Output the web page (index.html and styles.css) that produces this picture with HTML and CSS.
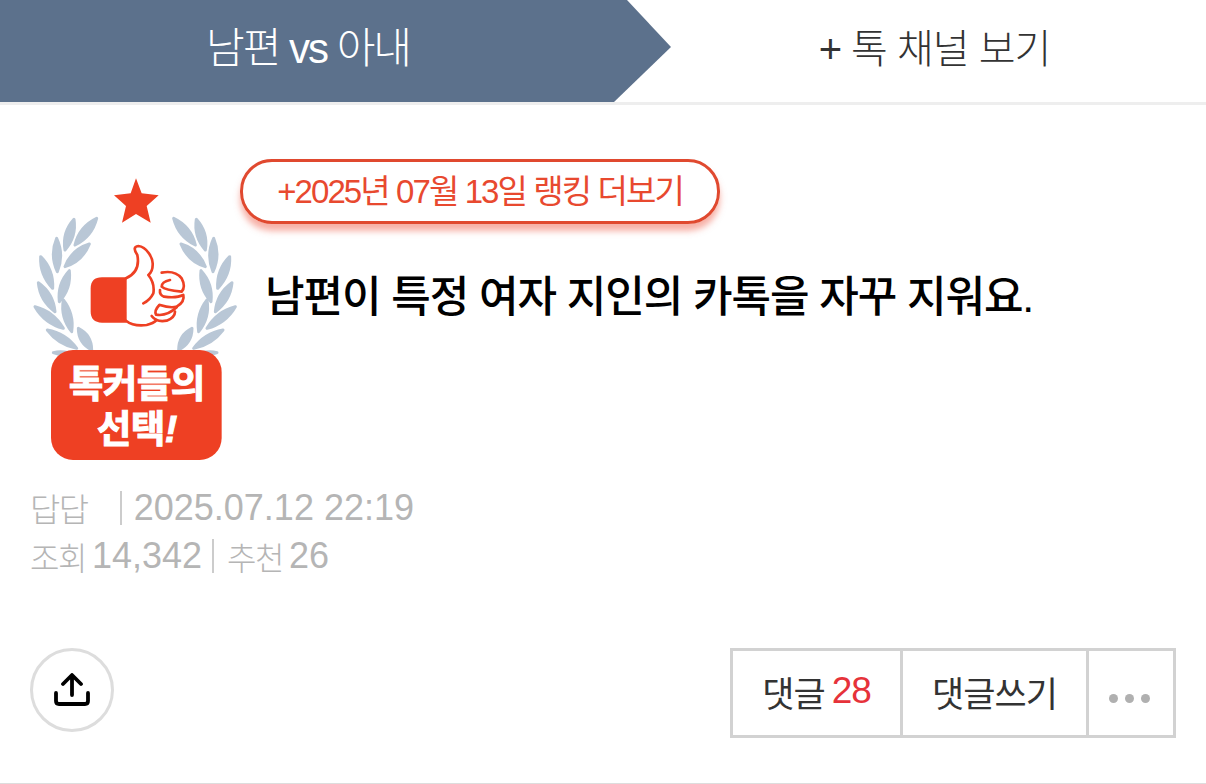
FILE: index.html
```html
<!DOCTYPE html>
<html lang="ko">
<head>
  <meta charset="UTF-8">
  <title>남편이 특정 여자 지인의 카톡을 자꾸 지워요.</title>
  <link rel="stylesheet" href="styles.css">
</head>
<body>

<div class="page">
  <div class="tabs">
    <div class="tab-active">남편 vs 아내</div>
    <div class="tab-more">+ 톡 채널 보기</div>
  </div>

  <div class="content">
    <div class="head-row">
      <svg class="badge" viewBox="90 75 630 870" width="210" height="290">
        <defs>
          <g id="laurel">
            <path d="M290 205Q276 260 225 285Q238 230 290 205Z"/>
            <path d="M222 208Q230 260 195 300Q186 248 222 208Z"/>
            <path d="M268 282Q247 334 195 350Q215 298 268 282Z"/>
            <path d="M170 265Q193 315 172 365Q149 315 170 265Z"/>
            <path d="M208 362Q214 415 178 455Q172 401 208 362Z"/>
            <path d="M122 320Q161 359 158 415Q119 375 122 320Z"/>
            <path d="M115 398Q160 430 165 485Q120 452 115 398Z"/>
            <path d="M190 450Q223 492 215 545Q181 502 190 450Z"/>
            <path d="M105 470Q160 484 190 535Q134 520 105 470Z"/>
            <path d="M235 535Q275 555 275 600Q235 579 235 535Z"/>
            <path d="M142 540Q197 550 230 595Q175 584 142 540Z"/>
            <path d="M160 608Q195 600 230 618Q195 622 160 608Z"/>
          </g>
        </defs>
        <path class="star" d="M408 85L425 130L476 136L440 168L452 218L408 192L366 218L378 168L342 136L392 130Z"/>
        <use href="#laurel" class="leaf"/>
        <use href="#laurel" class="leaf" transform="translate(811 0) scale(-1 1)"/>
        <path class="cuff" d="M380 382H306Q272 382 272 416V484Q272 518 306 518H380Z"/>
        <path class="hand" d="M378 385C400 375 420 355 412 315Q395 290 415 288C440 290 460 325 458 345Q458 365 445 375Q465 400 460 430Q450 450 430 460"/>
        <path class="hand" d="M378 512Q400 530 440 525Q460 520 470 510"/>
        <path class="hand" d="M485 368Q525 360 545 385Q558 410 545 425M510 390Q485 395 485 410Q495 420 545 425"/>
        <path class="hand" d="M480 420Q478 435 492 440Q530 445 550 435Q555 455 530 470Q510 475 480 465"/>
        <path class="hand" d="M478 465Q462 482 468 494Q500 500 530 472"/>
        <path class="hand" d="M455 498Q470 518 500 512Q525 502 525 485"/>
        <rect class="plate" x="153" y="600" width="512" height="330" rx="66"/>
        <text class="plate-text" x="410" y="742">톡커들의</text>
        <text class="plate-text" x="410" y="876">선택<tspan class="plate-mark">!</tspan></text>
      </svg>

      <div class="head-main">
        <a class="rank-link">+2025년 07월 13일 랭킹 더보기</a>
        <h1 class="title">남편이 특정 여자 지인의 카톡을 자꾸 지워요.</h1>
      </div>
    </div>

    <div class="meta">
      <div class="meta-row">
        <span class="author">답답</span>
        <span class="sep sep-author"></span>
        <span>2025.07.12 22:19</span>
      </div>
      <div class="meta-row">
        <span class="label">조회</span>
        <span>14,342</span>
        <span class="sep"></span>
        <span class="label">추천</span>
        <span>26</span>
      </div>
    </div>

    <div class="actions">
      <div class="share">
        <svg viewBox="0 0 36 34" width="36" height="34">
          <path d="M2 20V28Q2 31 5 31H31Q34 31 34 28V20M18 22V3M9 11L18 2L27 11"/>
        </svg>
      </div>
      <div class="btn-group">
        <div class="btn btn-reply">댓글<em>28</em></div>
        <div class="btn btn-write">댓글쓰기</div>
        <div class="btn btn-more"><i></i><i></i><i></i></div>
      </div>
    </div>
  </div>
</div>

</body>
</html>
```

FILE: styles.css
```css
* {
  box-sizing: border-box;
}

body {
  margin: 0;
  background: #fff;
  font-family: 'Liberation Sans', 'Noto Sans CJK KR', sans-serif;
}

.page {
  height: 784px;
  border-bottom: 1px solid #ddd;
  overflow: hidden;
}

/* top tabs */
.tabs {
  display: flex;
  height: 105px;
  border-bottom: 3px solid #eee;
}

.tab-active {
  width: 671px;
  padding-right: 55px;
  background: #5c718c;
  color: #fff;
  font-size: 42px;
  font-weight: 300;
  letter-spacing: -2px;
  line-height: 98px;
  text-align: center;
  clip-path: polygon(0 0, 627px 0, 671px 47px, 614px 102px, 0 102px);
}

.tab-more {
  flex: 1;
  padding-right: 8px;
  color: #333;
  font-size: 40px;
  font-weight: 300;
  letter-spacing: -1px;
  line-height: 98px;
  text-align: center;
}

.content {
  padding: 54px 30px 0;
}

.head-row {
  display: flex;
  height: 312px;
}

.badge {
  margin-top: 16px;
  flex: none;
}

.star, .cuff, .plate {
  fill: #ee4023;
}

.leaf {
  fill: #b9c7d6;
  stroke: #b9c7d6;
  stroke-width: 9;
  stroke-linejoin: round;
}

.hand {
  fill: none;
  stroke: #ee4023;
  stroke-width: 8;
  stroke-linecap: round;
  stroke-linejoin: round;
}

.plate-text {
  fill: #fff;
  stroke: #fff;
  stroke-width: 3;
  font-size: 113px;
  font-weight: 700;
  text-anchor: middle;
  letter-spacing: -2px;
}

.plate-mark {
  font-style: italic;
}

.rank-link {
  display: block;
  width: 480px;
  height: 65px;
  border: 3px solid #e0492f;
  border-radius: 32px;
  box-shadow: 0 7px 6px rgba(240, 100, 80, 0.5);
  color: #e8492f;
  font-size: 33px;
  letter-spacing: -1.9px;
  line-height: 59px;
  text-align: center;
}

.title {
  margin: 44px 0 0 25px;
  color: #000;
  font-size: 43px;
  font-weight: 500;
  letter-spacing: -1.1px;
  line-height: 58px;
  white-space: nowrap;
}

.meta {
  margin-top: 13px;
  color: #b5b5b5;
  font-size: 36px;
}

.meta-row {
  display: flex;
  align-items: center;
  height: 48px;
}

.author {
  font-weight: 300;
  font-size: 33px;
  letter-spacing: -1.5px;
}

.label {
  margin-right: 6px;
  font-weight: 300;
  font-size: 32px;
  letter-spacing: -1.5px;
}

.sep {
  width: 2px;
  height: 34px;
  margin: 0 13px 0 10px;
  background: #ccc;
}

.sep-author {
  margin: 0 12px 0 32px;
}

.actions {
  display: flex;
  justify-content: space-between;
  align-items: flex-start;
  margin-top: 68px;
}

.share {
  display: flex;
  justify-content: center;
  align-items: center;
  width: 84px;
  height: 84px;
  border: 3px solid #ddd;
  border-radius: 50%;
}

.share path {
  fill: none;
  stroke: #000;
  stroke-width: 3.8;
  stroke-linecap: round;
  stroke-linejoin: round;
}

.btn-group {
  display: flex;
  width: 446px;
  height: 90px;
  border: 3px solid #d2d2d2;
}

.btn {
  display: flex;
  justify-content: center;
  align-items: center;
  padding-bottom: 4px;
  color: #333;
  font-size: 35px;
  letter-spacing: -1px;
}

.btn em {
  margin-left: 7px;
  color: #e6323a;
  font-size: 37px;
  font-style: normal;
}

.btn-reply {
  width: 170px;
  border-right: 3px solid #d2d2d2;
}

.btn-write {
  width: 186px;
  border-right: 3px solid #d2d2d2;
}

.btn-more {
  flex: 1;
  gap: 7px;
  padding: 10px 4px 0 0;
}

.btn-more i {
  width: 9px;
  height: 9px;
  border-radius: 50%;
  background: #b0b0b0;
}
```
